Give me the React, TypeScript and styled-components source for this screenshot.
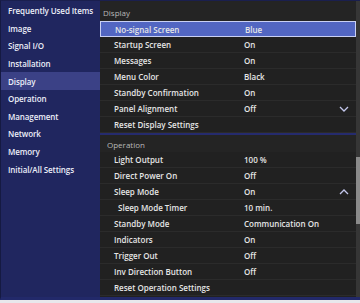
import React from "react";
import styled, { createGlobalStyle } from "styled-components";

const Global = createGlobalStyle`
  html, body { margin: 0; padding: 0; background: #e8e8ec; }
  body { font-family: "Open Sans", "Noto Sans", sans-serif; }
`;

const Frame = styled.div`
  width: 360px;
  height: 300px;
  box-sizing: border-box;
  display: flex;
  border-top: 1px solid #1a1f4e;
  border-left: 1px solid #151a42;
  border-bottom: 3px solid #22296a;
  overflow: hidden;
  background: #212121;
`;

const Sidebar = styled.nav`
  width: 99px;
  flex: none;
  background: #20265f;
  padding-top: 1px;
  display: flex;
  flex-direction: column;
`;

const NavItem = styled.div<{ $active?: boolean }>`
  height: 17.6px;
  display: flex;
  align-items: center;
  padding-left: 7px;
  font-size: 8px;
  font-weight: 600;
  letter-spacing: -0.1px;
  color: #eceef8;
  white-space: nowrap;
  background: ${(p) => (p.$active ? "#3b4186" : "transparent")};
`;

const Main = styled.div`
  flex: 1;
  display: flex;
  min-width: 0;
`;

const Content = styled.div`
  flex: 1;
  display: flex;
  flex-direction: column;
  min-width: 0;
`;

const Scrollbar = styled.div`
  width: 4px;
  flex: none;
  background: #363636;
  display: flex;
  flex-direction: column;
`;

const Thumb = styled.div<{ $top: number; $height: number }>`
  margin-top: ${(p) => p.$top}px;
  height: ${(p) => p.$height}px;
  background: #8a8a8a;
`;

const SectionHeader = styled.div<{ $indent: number; $h: number }>`
  height: ${(p) => p.$h}px;
  flex: none;
  display: flex;
  align-items: center;
  padding-left: ${(p) => p.$indent}px;
  padding-top: 2px;
  box-sizing: border-box;
  font-size: 8px;
  color: #b8b8b8;
  background: #242424;
`;

const Row = styled.div<{ $selected?: boolean }>`
  height: 16px;
  flex: none;
  box-sizing: border-box;
  display: flex;
  align-items: center;
  font-size: 8px;
  font-weight: 600;
  color: #e6e6e6;
  background: ${(p) => (p.$selected ? "#5266c2" : "#212121")};
  border: ${(p) => (p.$selected ? "1px solid #c9d0f4" : "none")};
  border-bottom: ${(p) =>
    p.$selected ? "1px solid #c9d0f4" : "1px solid #2b2b2b"};
  white-space: nowrap;
`;

const Label = styled.span<{ $sub?: boolean }>`
  width: ${(p) => (p.$sub ? 126 : 130)}px;
  padding-left: ${(p) => (p.$sub ? 18 : 14)}px;
  flex: none;
`;

const Value = styled.span`
  flex: 1;
`;

const Chevron = styled.svg`
  width: 10px;
  height: 6px;
  margin-right: 7px;
  flex: none;
`;

const Divider = styled.div`
  height: 2px;
  flex: none;
  background: #252b6e;
`;

const Filler = styled.div`
  flex: 1;
  background: #212121;
`;

type Item = { label: string; value?: string; sub?: boolean; chevron?: "up" | "down"; selected?: boolean };

const display: Item[] = [
  { label: "No-signal Screen", value: "Blue", selected: true },
  { label: "Startup Screen", value: "On" },
  { label: "Messages", value: "On" },
  { label: "Menu Color", value: "Black" },
  { label: "Standby Confirmation", value: "On" },
  { label: "Panel Alignment", value: "Off", chevron: "down" },
  { label: "Reset Display Settings" },
];

const operation: Item[] = [
  { label: "Light Output", value: "100 %" },
  { label: "Direct Power On", value: "Off" },
  { label: "Sleep Mode", value: "On", chevron: "up" },
  { label: "Sleep Mode Timer", value: "10 min.", sub: true },
  { label: "Standby Mode", value: "Communication On" },
  { label: "Indicators", value: "On" },
  { label: "Trigger Out", value: "Off" },
  { label: "Inv Direction Button", value: "Off" },
  { label: "Reset Operation Settings" },
];

const nav = [
  "Frequently Used Items",
  "Image",
  "Signal I/O",
  "Installation",
  "Display",
  "Operation",
  "Management",
  "Network",
  "Memory",
  "Initial/All Settings",
];

function Rows({ items }: { items: Item[] }) {
  return (
    <>
      {items.map((it) => (
        <Row key={it.label} $selected={it.selected}>
          <Label $sub={it.sub}>{it.label}</Label>
          <Value>{it.value ?? ""}</Value>
          {it.chevron && (
            <Chevron viewBox="0 0 10 6">
              <path
                d={it.chevron === "down" ? "M1 1 L5 5 L9 1" : "M1 5 L5 1 L9 5"}
                fill="none"
                stroke="#c3c7ec"
                strokeWidth="1.3"
              />
            </Chevron>
          )}
        </Row>
      ))}
    </>
  );
}

export default function App() {
  return (
    <>
      <Global />
      <Frame>
        <Sidebar>
          {nav.map((n) => (
            <NavItem key={n} $active={n === "Display"}>
              {n}
            </NavItem>
          ))}
        </Sidebar>
        <Main>
          <Content>
            <SectionHeader $indent={3} $h={20}>Display</SectionHeader>
            <Rows items={display} />
            <Divider />
            <SectionHeader $indent={7} $h={17}>Operation</SectionHeader>
            <Rows items={operation} />
            <Filler />
          </Content>
          <Scrollbar>
            <Thumb $top={156} $height={67} />
          </Scrollbar>
        </Main>
      </Frame>
    </>
  );
}
